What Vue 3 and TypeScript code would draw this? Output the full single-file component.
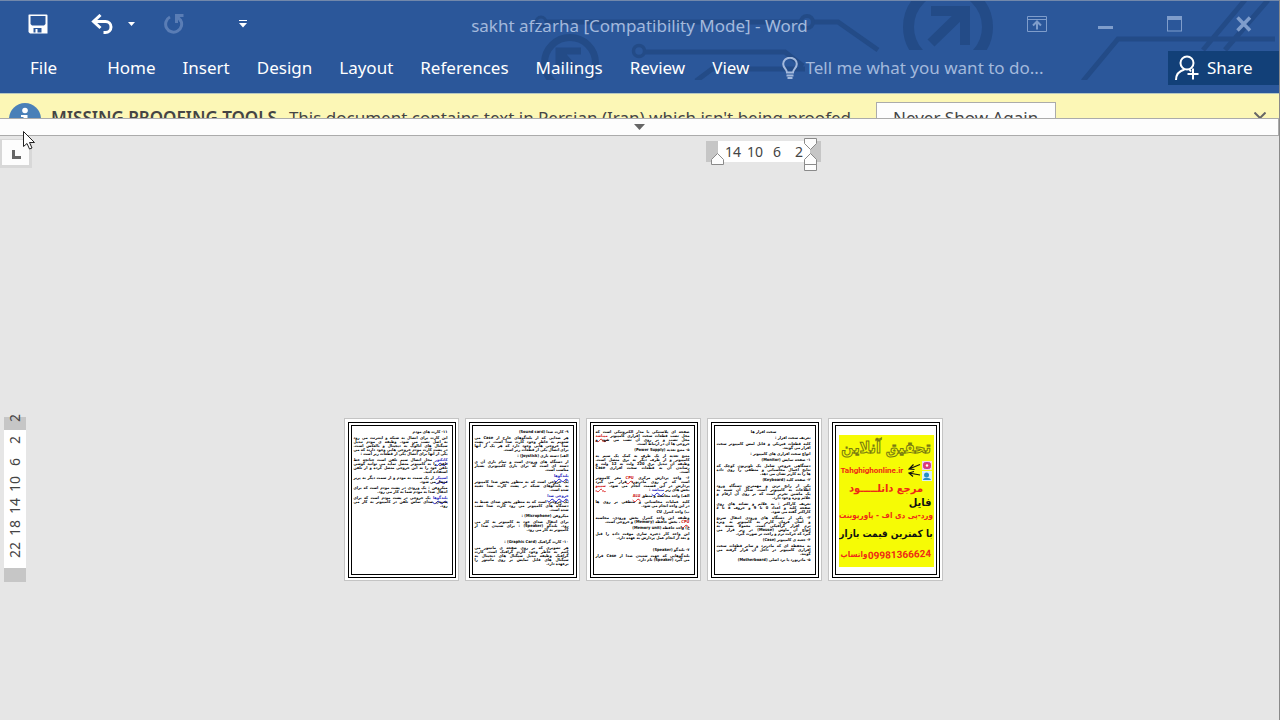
<script setup lang="ts">
type Kind = 'head' | 'title' | 'body' | 'blue'
interface Para { kind: Kind; lines: string[]; space?: boolean }

const tabs: string[] = ['Home', 'Insert', 'Design', 'Layout', 'References', 'Mailings', 'Review', 'View']
const across: number[] = [14, 10, 6, 2]
const down: number[] = [2, 2, 6, 10, 14, 18, 22]

const p = (kind: Kind, ...lines: string[]): Para => ({ kind, lines })

// Marks: [[red]] and {{blue}} wrap words flagged by the proofing tools.
const sheets: Para[][] = [
  [
    p('head', '۱۱- کارت های مودم'),
    p('body', 'این کارت برای اتصال به شبکه و اینترنت می رود', 'به اصل نصب می شود. وظیفه ی مودم تبدیل', 'سیگنال های آنالوگ به دیجیتال و بالعکس است.', 'در پشت کارت مودم خروجی هایی وجود دارند که می', 'یکی از آنها برای اتصال یکی از قطعات زیر است :'),
    p('body', '{{کانکتور}} محل اتصال سیم تلفن است چنانچه خط', 'تلفن را به کامپیوتر متصل نماید می توانید گوشی', 'تلفن خود را به این خروجی متصل کرده و از تلفن', 'استفاده کنید.'),
    p('body', '{{اسپیکر}} از یک سمت به مودم و از سمت دیگر به پریز', 'متصل می شود.'),
    p('body', 'میکروفن : یک ورودی در پشت مودم است که برای', 'انتقال صدا به مودم شما به کار می رود.'),
    p('body', '{{بلندگوها}} یک خروجی در پشت مودم است که برای', 'شنیدن صدای تماس تلفن در کامپیوتر به کار می', 'رود.'),
  ],
  [
    p('head', '۹- کارت صدا (Sound card)'),
    p('body', 'هر صدایی که از بلندگوهای خارج از Case می', 'شنویم به خاطر وجود کارت صدا است. در پشت', 'صدا خروجی هایی وجود دارد که هر یک از آنها', 'برای اتصال یکی از قطعات زیر است.'),
    p('head', 'الف) دسته بازی (Joystick) :'),
    p('body', 'از دستگاه های ورودی است و تمام بازی آن ی', 'دسته ای است که برای بازی کامپیوتری بسیار', 'مناسب است.'),
    p('blue', '{{بلندگوها}}'),
    p('body', 'یک خروجی است که به منظور پخش صدا کامپیوتر', 'به بلندگوهای شبکه در پشت کارت صدا تعبیه', 'شده است.'),
    p('blue', '{{خروجی صدا}}'),
    p('body', 'یک خروجی است که به منظور پخش صدای ضبط به', 'دستگاه های کامپیوتر می رود کارت صدا نصب', 'شده است.'),
    p('head', 'میکروفن (Microphone) :'),
    p('body', 'برای انتقال صدای خود به کامپیوتر به کار می', 'رود. بلندگو (Speaker) : برای شنیدن صدا از', 'کامپیوتر به کار می رود.'),
    { kind: 'head', lines: ['۱۰- کارت گرافیک (Graphic Card) :'], space: true },
    p('body', 'هر تصویری که بر روی صفحه ی مانیتور می', 'کنیم به خاطر وجود کارت گرافیک است. کارت', 'گرافیک وظیفه تبدیل سیگنال های دیجیتال به', 'سیگنال های قابل نمایش بر روی مانیتور را', 'برعهده دارد.'),
  ],
  [
    p('body', 'صفحه ای پلاستیکی با مدار الکترونیکی است که', 'محل نصب قطعات سخت افزاری کامپیوتر [[میباشد]]', 'محل نصب و بر روی آن نصب می شود و', 'خروجی ها آن در ارتباط است.'),
    p('head', '۵- منبع تغذیه (Power Supply)'),
    p('body', 'منبع تغذیه از یک طرف به کمک یک سیم به', 'کامپیوتر و از طرف دیگر به برق متصل است.', 'وظیفه آن تبدیل برق 220 ولت به 12 ولت و', 'رساندن آن به قطعات سخت افزاری Case', 'است.'),
    p('body', '۶- واحد پردازش مرکزی [[CPU]] مغز کامپیوتر', 'است که بر روی مادربورد قرار می گیرد', 'پردازش در این قسمت انجام می شود. [[سیپیو]]', 'بخش های زیر {{میباشد}} :'),
    p('head', 'الف) واحد محاسبه و منطق [[ALU]]'),
    p('body', 'کلیه عملیات محاسباتی و منطقی بر روی ها', 'در این واحد انجام می شود.'),
    p('head', 'ب) واحد کنترل CU'),
    p('body', 'وظیفه این واحد کنترل بخش ورودی، محاسبه', '[[CPU]] ، بخش حافظه (Memory) و خروجی است.'),
    p('head', 'ج) واحد حافظه (Memory unit)'),
    p('body', 'این واحد کار ذخیره سازی موقت داده را قبل', 'و بعد از انجام عمل پردازش به عهده دارد.'),
    { kind: 'head', lines: ['۷- بلندگو (Speaker)'], space: true },
    p('body', 'بلندگوهایی که جهت شنیدن صدا از Case قرار', 'می گیرد (Speaker) نام دارد.'),
  ],
  [
    p('title', 'سخت افزار ها'),
    p('head', 'تعریف سخت افزار :'),
    p('body', 'کلیه قطعات فیزیکی و قابل لمس کامپیوتر سخت', 'افزار می گویند.'),
    p('head', 'انواع سخت افزاری های کامپیوتر :'),
    p('head', '۱- صفحه نمایش (Monitor)'),
    p('body', 'دستگاهی خروجی شامل یک تلویزیون کوچک که', 'نتایج اعمال محاسباتی و منطقی را روی داده', 'ها را به کاربر نشان می دهد.'),
    p('head', '۲- صفحه کلید (Keyboard)'),
    p('body', 'یکی از رایج ترین و مهمترین دستگاه ورود', 'اطلاعات به کامپیوتر است. شکل آن شبیه به', 'یک ماشین تحریر است که بر روی آن ارقام و', 'علائم ویژه وجود دارد.'),
    p('body', 'تعریف کاراکتر : به علائم و نشانه های روی', 'صفحه کلید و اعداد 0 تا 9 و حروف a تا z', 'کاراکتر گفته می شود.'),
    p('body', '۳- یکی از دستگاه های ورودی انتقال سریع', 'و آسان فرمان کاربر به کامپیوتر به ویژه', 'نرم افزار گرافیکی است. معمولاً بسته به', 'انواع آن ماوس (Mouse) در زیر قرار می', 'گیرد که حرکت نرم و راحت تر صورت گیرد.'),
    p('head', '۴- جعبه ی کامپیوتر (Case)'),
    p('body', 'به محفظه ای که مادربرد و سایر قطعات سخت', 'افزاری کامپیوتر در داخل آن قرار گرفته می', 'گویند.'),
    p('head', '۵- مادربورد یا برد اصلی (Motherboard)'),
  ],
]

interface Run { text: string; mark: '' | 'red' | 'wavy' }
function runs(line: string): Run[] {
  return line.split(/(\[\[.*?\]\]|\{\{.*?\}\})/).filter(Boolean).map((part): Run => {
    if (part.startsWith('[[')) return { text: part.slice(2, -2), mark: 'red' }
    if (part.startsWith('{{')) return { text: part.slice(2, -2), mark: 'wavy' }
    return { text: part, mark: '' }
  })
}
</script>

<template>
  <div class="window">
    <header class="header">
      <svg class="circuit" viewBox="530 0 750 79" width="750" height="79" aria-hidden="true">
        <g fill="none" stroke="#234b87" stroke-width="5">
          <circle cx="541" cy="21" r="5" stroke-width="3" />
          <path d="M546 21H801M813 21H838L878 49" />
          <circle cx="807" cy="21" r="6" stroke-width="4" />
          <circle cx="570" cy="62" r="25.500" stroke-width="7" />
          <path d="M559 66V50H581M560 51L578 72" stroke-width="7" />
          <circle cx="639" cy="50" r="5.500" stroke-width="3.500" />
          <path d="M645 51H785L803 65M696 80L712 68H805" />
          <path d="M1083 80L1118 38H1275M1203 49L1245 -1M1225 49L1268 -1" />
        </g>
        <svg x="900" y="0" width="100" height="49" viewBox="900 0 100 49">
          <g fill="none" stroke="#234b87">
            <circle cx="948" cy="26" r="39.500" stroke-width="11" />
            <path d="M931 10H965V44M931 42L963 11" stroke-width="10" />
          </g>
        </svg>
      </svg>

      <div class="titlebar">
        <div class="quick">
          <button class="save" aria-label="Save">
            <svg viewBox="0 0 20 20" width="20" height="20">
              <path fill="#fff" fill-rule="evenodd" d="M1 .5H18.500Q19.500 .5 19.500 1.500V19.500H2L.5 18V1Q.5 .5 1 .5ZM2.500 2V10L4 11.500H16L17.500 10V2ZM5.500 14V18.500H7.500V15H9.500V18.500H13.500V14Z" />
            </svg>
          </button>
          <button class="undo" aria-label="Undo">
            <svg viewBox="0 0 23 20" width="23" height="20" fill="none" stroke="#fff" stroke-width="3">
              <path d="M9.500 1L2.500 7.500L9.500 14" /><path d="M3 7.500H14.500A5.500 5.500 0 0 1 14.500 18.500H12.500" />
            </svg>
          </button>
          <button class="undo-list" aria-label="Undo history">
            <svg viewBox="0 0 7 4" width="7" height="4"><path fill="#fff" d="M0 0H7L3.500 4Z" /></svg>
          </button>
          <button class="redo" aria-label="Repeat" disabled>
            <svg viewBox="0 0 20 20" width="20" height="20" fill="none" stroke="#5a7db5" stroke-width="3">
              <path d="M6 3A8 8 0 1 0 16.500 6" /><path d="M19.500 1.500H12.500V9" /><path d="M13 2L17 7" />
            </svg>
          </button>
          <button class="customize" aria-label="Customize Quick Access Toolbar">
            <svg viewBox="0 0 8 8" width="8" height="8"><path fill="#fff" d="M0 0H8V1H0ZM0 3H8L4 7.500Z" /></svg>
          </button>
        </div>
        <h1 class="doc-title">sakht afzarha [Compatibility Mode] - Word</h1>
        <div class="controls">
          <button aria-label="Ribbon Display Options">
            <svg viewBox="0 0 20 16" width="20" height="16" fill="none" stroke="#7f9dcb"><path d="M.5 .5H19.500V15.500H.5ZM.5 3.500H19.500" /><path d="M10 13.500V6M6 9.500L10 5.500L14 9.500" stroke-width="2" /></svg>
          </button>
          <button aria-label="Minimize">
            <svg viewBox="0 0 16 16" width="16" height="16"><path fill="#7f9dcb" d="M0 10H15V13H0Z" /></svg>
          </button>
          <button aria-label="Restore">
            <svg viewBox="0 0 16 16" width="16" height="16"><path fill="#7f9dcb" fill-rule="evenodd" d="M0 0H15V15.500H0ZM1 4V14.500H14V4Z" /></svg>
          </button>
          <button aria-label="Close">
            <svg viewBox="0 0 16 16" width="16" height="16"><path stroke="#7f9dcb" stroke-width="3.500" d="M1.500 1.500L14 14.500M14 1.500L1.500 14.500" /></svg>
          </button>
        </div>
      </div>

      <nav class="tabs" aria-label="Ribbon">
        <button class="tab file">File</button>
        <button v-for="tab in tabs" :key="tab" class="tab">{{ tab }}</button>
        <label class="tell">
          <svg viewBox="0 0 16 22" width="16" height="22" fill="none" stroke="#a3b9dc" stroke-width="2">
            <path d="M5 15.500C5 12 1.200 11 1.200 7A6.500 6 0 0 1 14.800 7C14.800 11 11 12 11 15.500Z" /><path d="M4.500 18.500H11.500M5.500 21H10.500" />
          </svg>
          <input type="text" aria-label="Tell me what you want to do" placeholder="Tell me what you want to do..." />
        </label>
        <button class="share">
          <svg viewBox="0 0 24 26" width="24" height="26" fill="none" stroke="#fff" stroke-width="2">
            <circle cx="12" cy="8" r="6.500" /><path d="M1 25C1 19 4 16 9.500 14.500M14 14L16 16.500M18 13.500V24.500M12.500 19H23.500" />
          </svg>
          Share
        </button>
      </nav>
    </header>

    <section class="notice" aria-label="Message bar">
      <svg class="info" viewBox="0 0 32 32" width="32" height="32"><circle cx="16" cy="16" r="16" fill="#4a80b8" /><circle cx="16" cy="7.500" r="2.800" fill="#fff" /><path fill="#fff" d="M12 12H18.500V25H21V27H12V25H14.500V14H12Z" /></svg>
      <strong>MISSING PROOFING TOOLS</strong>
      <span class="message">This document contains text in Persian (Iran) which isn't being proofed.</span>
      <button class="never">Never Show Again</button>
      <button class="dismiss" aria-label="Close message">
        <svg viewBox="0 0 12 12" width="12" height="12"><path stroke="#666" stroke-width="2" d="M.5 .5L11.500 11.500M11.500 .5L.5 11.500" /></svg>
      </button>
    </section>

    <button class="ribbon-grip" aria-label="Show ribbon">
      <svg viewBox="0 0 11 6" width="11" height="6"><path fill="#666" d="M0 0H11L5.500 6Z" /></svg>
    </button>

    <main class="workspace">
      <div class="ruler-row">
        <button class="tab-stop" aria-label="Left tab">
          <svg viewBox="0 0 9 9" width="9" height="9"><path fill="#666" d="M0 0H3V6H9V9H0Z" /></svg>
        </button>
        <div class="ruler-across">
          <div class="ticks"><span v-for="n in across" :key="n">{{ n }}</span></div>
          <svg class="indent left" viewBox="0 0 13 13" width="13" height="13"><path class="marker" d="M.5 11.500V6.500L6.500 .5L12.500 6.500V11.500Z" /></svg>
          <svg class="indent right" viewBox="0 0 13 34" width="13" height="34"><path class="marker" d="M.5 .5H12.500V5.500L6.500 11.500L.5 5.500ZM.5 26.500V21.500L6.500 15.500L12.500 21.500V26.500ZM.5 26.500H12.500V32.500H.5Z" /></svg>
        </div>
      </div>

      <div class="canvas">
        <div class="ruler-down"><span v-for="(n, i) in down" :key="i">{{ n }}</span></div>
        <div class="sheets">
          <article v-for="(sheet, s) in sheets" :key="s" class="sheet">
            <div class="frame text" dir="rtl" lang="fa">
              <div v-for="(para, i) in sheet" :key="i" class="para" :class="[para.kind, { space: para.space }]">
                <div v-for="(line, j) in para.lines" :key="j" class="line" :class="{ full: para.kind === 'body' && j < para.lines.length - 1 }"><span v-for="(run, k) in runs(line)" :key="k" :class="run.mark">{{ run.text }}</span></div>
              </div>
            </div>
          </article>
          <article class="sheet">
            <div class="frame cover" dir="rtl" lang="fa">
              <div class="poster">
                <p class="brand">تحقیق آنلاین</p>
                <div class="site" dir="ltr">
                  <span>Tahghighonline.ir</span>
                  <svg viewBox="0 0 26 20" width="26" height="20">
                    <path d="M12 3.500L1 8M12 14L1 12M5.500 3.500L1 8L6.500 8.500M6 10.500L1 12L5 15.500" fill="none" stroke="#111" stroke-width="1.200" />
                    <rect x="14" y="0" width="10" height="9" fill="#f3d6e3" /><rect x="15.500" y="1.500" width="7" height="6" rx="2" fill="#e33b72" stroke="#b93aa0" /><circle cx="19" cy="4.500" r="1.200" fill="#fff" />
                    <rect x="14" y="10" width="10" height="10" fill="#d9eef8" /><circle cx="18.500" cy="14" r="2.500" fill="#278fc4" /><path d="M15 19C15 16 22 16 23 19Z" fill="#278fc4" />
                  </svg>
                </div>
                <p class="source">مرجع دانلـــــود</p>
                <p class="files">فایل</p>
                <p class="formats">ورد-پی دی اف - پاورپوینت</p>
                <p class="price">با کمترین قیمت بازار</p>
                <p class="phone"><span class="number">09981366624</span><span>واتساپ</span></p>
              </div>
            </div>
          </article>
        </div>
      </div>
    </main>

    <svg class="pointer" viewBox="0 0 12 19" width="12" height="19" aria-hidden="true"><path d="M.5 .5V15.500L4 12.500L6.500 18L9 17L6.500 11.500H11.500Z" fill="#fff" stroke="#222" /></svg>
  </div>
</template>

<style>
body { margin: 0; background: #e6e6e6; }
</style>

<style scoped>
.window {
  box-sizing: border-box;
  display: flex;
  flex-direction: column;
  min-height: 100vh;
  position: relative;
  overflow: hidden;
  border-right: 1px solid #8a8a8a;
  background: #e6e6e6;
  color: #444;
  font: 17px/24px "Noto Sans", "Open Sans", sans-serif;
}
button { padding: 0; border: 0; background: none; color: inherit; font: inherit; }
svg { display: block; flex: none; }
p { margin: 0; }

.header { position: relative; background: #2b579a; color: #fff; border-top: 1px solid #7288ab; border-bottom: 1px solid #b5c7c0; }
.circuit { position: absolute; top: 0; right: -1px; }
.titlebar { position: relative; display: grid; grid-template-columns: 1fr auto 1fr; align-items: start; height: 50px; }
.quick { display: flex; align-items: center; height: 46px; padding-left: 28px; }
.undo { margin-left: 43px; }
.undo-list { margin-left: 14px; }
.redo { margin-left: 29px; }
.customize { margin-left: 55px; }
.doc-title { margin: 0; color: #a3b9dc; font-size: 17px; font-weight: 400; line-height: 50px; white-space: nowrap; }
.controls { display: flex; align-items: center; justify-content: flex-end; gap: 53px; height: 46px; padding-right: 27px; }
.controls button:first-child { margin-right: -2px; }
.tabs { position: relative; display: flex; align-items: flex-start; gap: 27px; height: 42px; padding-left: 30px; }
.tab { height: 34px; white-space: nowrap; }
.file { margin-right: 23px; }
.tell { display: flex; flex: 1; align-items: center; gap: 7px; height: 34px; margin-left: 6px; min-width: 0; }
.tell input { flex: 1; min-width: 0; padding: 0; border: 0; outline: 0; background: none; color: #fff; font: inherit; }
.tell input::placeholder { color: #a3b9dc; opacity: 1; }
.share { display: flex; align-items: center; gap: 8px; box-sizing: border-box; width: 111px; height: 34px; padding-left: 7px; background: #124078; }

.notice { display: flex; box-sizing: border-box; height: 24px; padding: 8px 13px 0 9px; overflow: hidden; background: #fcf7b6; white-space: nowrap; }
.notice > * { flex: none; }
.info { margin-top: 1px; }
.notice strong { margin: 4px 12px 0 10px; font-weight: 600; }
.message { margin-top: 4px; }
.never { box-sizing: border-box; width: 180px; height: 32px; margin-left: 20px; border: 1px solid #ababab; background: #fdfdfd; }
.notice .dismiss { align-self: flex-start; margin: 10px 0 0 auto; }

.ribbon-grip { display: flex; justify-content: center; align-items: center; box-sizing: border-box; height: 18px; border: 1px solid #ababab; border-left: 0; background: #fdfdfd; }

.workspace { display: flex; flex: 1; flex-direction: column; font-size: 14px; line-height: 20px; }
.ruler-row { display: flex; align-items: flex-start; padding-top: 3px; }
.tab-stop { display: flex; align-items: center; justify-content: center; box-sizing: border-box; width: 32px; height: 29px; padding: 3px 0 0 1px; border: 3px solid #d8d8d8; border-top-width: 1px; border-left-width: 2px; background: #fdfdfd; }
.ruler-across { position: relative; box-sizing: border-box; width: 115px; height: 21px; margin: 2px auto 0; left: 108px; border: solid #c6c6c6; border-width: 0 11px 0 12px; background: #fff; }
.ticks { display: flex; padding: 1px 0 0 4px; }
.ticks span { width: 22px; text-align: center; }
.indent { position: absolute; }
.indent.left { left: -7px; top: 12px; }
.indent.right { right: -7px; top: -3px; }
.marker { fill: #fdfdfd; stroke: #8a8a8a; }

.canvas { display: flex; flex: 1; align-items: center; padding: 110px 19px 0 4px; }
.ruler-down { display: flex; flex-direction: column; box-sizing: border-box; width: 22px; height: 165px; border: solid #c6c6c6; border-width: 13px 0 14px; background: #fff; }
.ruler-down span { flex: none; width: 22px; height: 22px; line-height: 22px; text-align: center; writing-mode: vertical-rl; transform: rotate(180deg); }
.ruler-down span:first-child { margin-top: -23px; }
.sheets { display: flex; flex: 1; justify-content: center; gap: 6px; }
.sheet { box-sizing: border-box; width: 115px; height: 163px; padding: 3px 2px 2px 3px; border: 1px solid #c4c4c4; background: #fff; }
.frame { box-sizing: border-box; height: 100%; overflow: hidden; border: 4px double #000; background: #fff; }
.text { display: flex; flex-direction: column; gap: 2px; padding: 4px 4px 0 2px; color: #000; font: bold 4px/4px "DejaVu Sans Condensed", "DejaVu Sans", sans-serif; }
.para { flex: none; }
.title { text-align: center; }
.space { margin-top: 6px; }
.line { height: 4px; white-space: nowrap; }
.full { text-align-last: justify; }
.red { color: #c11; text-decoration: underline wavy #d22 1px; text-decoration-skip-ink: none; }
.wavy { color: #22b; text-decoration: underline wavy #22c 1px; text-decoration-skip-ink: none; }

.cover { padding: 9px 2px 8px 3px; }
.poster { display: flex; flex-direction: column; height: 132px; overflow: hidden; background: #f6fb05; color: #ee2a16; font: bold 10px/16px "DejaVu Sans Condensed", "DejaVu Sans", sans-serif; text-align: center; white-space: nowrap; }
.poster > * { flex: none; }
.brand { height: 26px; font-size: 16px; line-height: 26px; color: #f6fb05; -webkit-text-stroke: 1px #777a12; }
.site { display: flex; align-items: center; justify-content: space-between; height: 20px; padding-left: 2px; font: bold 8px/20px Roboto, "Liberation Sans", sans-serif; }
.source { height: 15px; font-size: 11px; line-height: 15px; }
.files { height: 13px; padding-right: 2px; font-size: 11px; line-height: 13px; color: #111; text-align: right; }
.formats { height: 14px; font-size: 8px; line-height: 14px; }
.price { height: 22px; font-size: 10px; line-height: 22px; color: #111; }
.phone { display: flex; align-items: center; justify-content: center; gap: 1px; height: 20px; font-size: 8px; }
.number { font: bold 10px/20px Roboto, "Liberation Sans", sans-serif; transform: rotate(-2deg); }

.pointer { position: absolute; left: 23px; top: 131px; }
</style>
